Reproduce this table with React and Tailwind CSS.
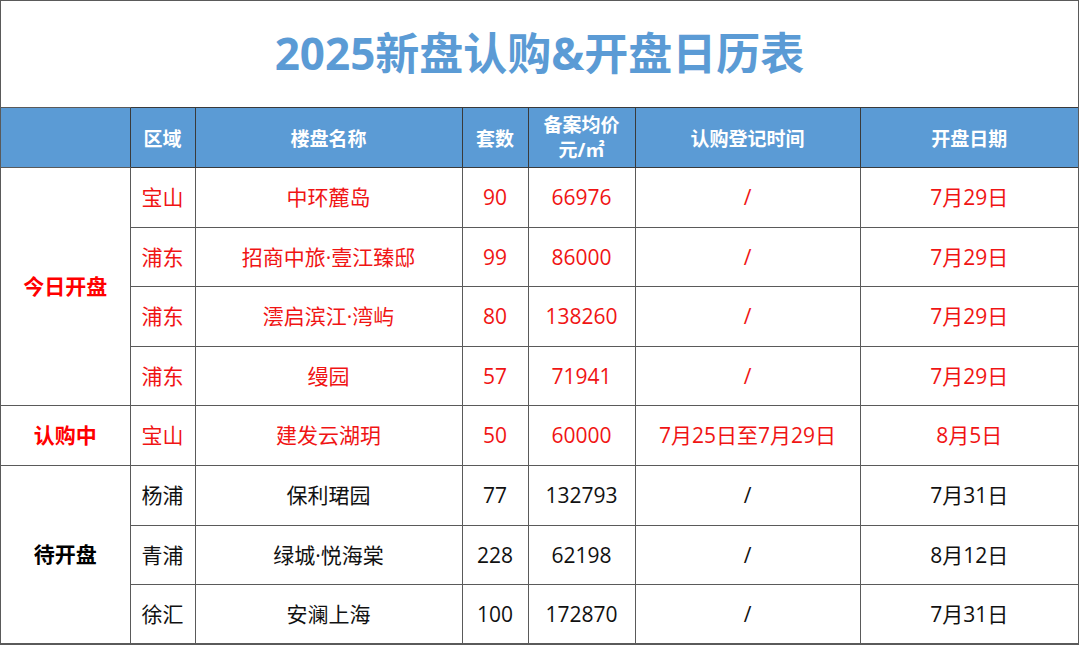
import React from "react";

const F = { fontFamily: '"Open Sans", "Noto Sans CJK SC", "Noto Sans", sans-serif' };

const rows = [
  { area: "宝山", name: "中环麓岛", n: "90", price: "66976", reg: "/", date: "7月29日", red: true },
  { area: "浦东", name: "招商中旅·壹江臻邸", n: "99", price: "86000", reg: "/", date: "7月29日", red: true },
  { area: "浦东", name: "澐启滨江·湾屿", n: "80", price: "138260", reg: "/", date: "7月29日", red: true },
  { area: "浦东", name: "缦园", n: "57", price: "71941", reg: "/", date: "7月29日", red: true },
  { area: "宝山", name: "建发云湖玥", n: "50", price: "60000", reg: "7月25日至7月29日", date: "8月5日", red: true },
  { area: "杨浦", name: "保利珺园", n: "77", price: "132793", reg: "/", date: "7月31日", red: false },
  { area: "青浦", name: "绿城·悦海棠", n: "228", price: "62198", reg: "/", date: "8月12日", red: false },
  { area: "徐汇", name: "安澜上海", n: "100", price: "172870", reg: "/", date: "7月31日", red: false },
];

const heights = ["h-[60px]", "h-[59px]", "h-[60px]", "h-[59px]", "h-[60px]", "h-[60px]", "h-[59px]", "h-[59px]"];

const groups = {
  0: { span: 4, label: "今日开盘", cls: "text-[#ff0000]" },
  4: { span: 1, label: "认购中", cls: "text-[#ff0000]" },
  5: { span: 3, label: "待开盘", cls: "text-black" },
};

export default function App() {
  return (
    <div className="w-[1080px] h-[645px] bg-white" style={F}>
      <div className="w-[1079px] border border-[#5a5a5a] flex flex-col">
        <div className="h-[106px] shrink-0 flex items-center justify-center">
          <h1 className="text-[44px] font-bold text-[#5b9bd5] leading-none pb-[2px]">
            2025新盘认购&amp;开盘日历表
          </h1>
        </div>
        <table className="shrink-0 table-fixed border-collapse w-[1077px] text-[21px]">
          <colgroup>
            <col className="w-[129px]" />
            <col className="w-[65px]" />
            <col className="w-[267px]" />
            <col className="w-[66px]" />
            <col className="w-[107px]" />
            <col className="w-[225px]" />
            <col className="w-[218px]" />
          </colgroup>
          <thead>
            <tr className="h-[60px] bg-[#5b9bd5] text-white font-bold text-[19px] leading-[25px]">
              <th className="border-t border-b border-[#5a5a5a]"></th>
              <th className="border border-[#3a3a3a] font-bold pt-[4px]">区域</th>
              <th className="border border-[#3a3a3a] font-bold pt-[4px]">楼盘名称</th>
              <th className="border border-[#3a3a3a] font-bold pt-[4px]">套数</th>
              <th className="border border-[#3a3a3a] font-bold">
                <div>备案均价</div>
                <div>元/㎡</div>
              </th>
              <th className="border border-[#3a3a3a] font-bold pt-[4px]">认购登记时间</th>
              <th className="border-t border-b border-l border-[#3a3a3a] font-bold pt-[4px]">开盘日期</th>
            </tr>
          </thead>
          <tbody>
            {rows.map((r, i) => {
              const c = r.red ? "text-[#f01414]" : "text-[#111]";
              const g = groups[i];
              return (
                <tr key={i} className={heights[i]}>
                  {g && (
                    <td
                      rowSpan={g.span}
                      className={`border-r border-b border-[#5a5a5a] text-center font-bold text-[21px] ${g.cls}`}
                    >
                      {g.label}
                    </td>
                  )}
                  <td className={`border border-[#5a5a5a] text-center pt-[1px] ${c}`}>{r.area}</td>
                  <td className={`border border-[#5a5a5a] text-center pt-[1px] ${c}`}>{r.name}</td>
                  <td className={`border border-[#5a5a5a] text-center pt-[1px] ${c}`}>{r.n}</td>
                  <td className={`border border-[#5a5a5a] text-center pt-[1px] ${c}`}>{r.price}</td>
                  <td className={`border border-[#5a5a5a] text-center pt-[1px] ${c}`}>{r.reg}</td>
                  <td className={`border-t border-b border-l border-[#5a5a5a] text-center pt-[1px] ${c}`}>{r.date}</td>
                </tr>
              );
            })}
          </tbody>
        </table>
      </div>
    </div>
  );
}
